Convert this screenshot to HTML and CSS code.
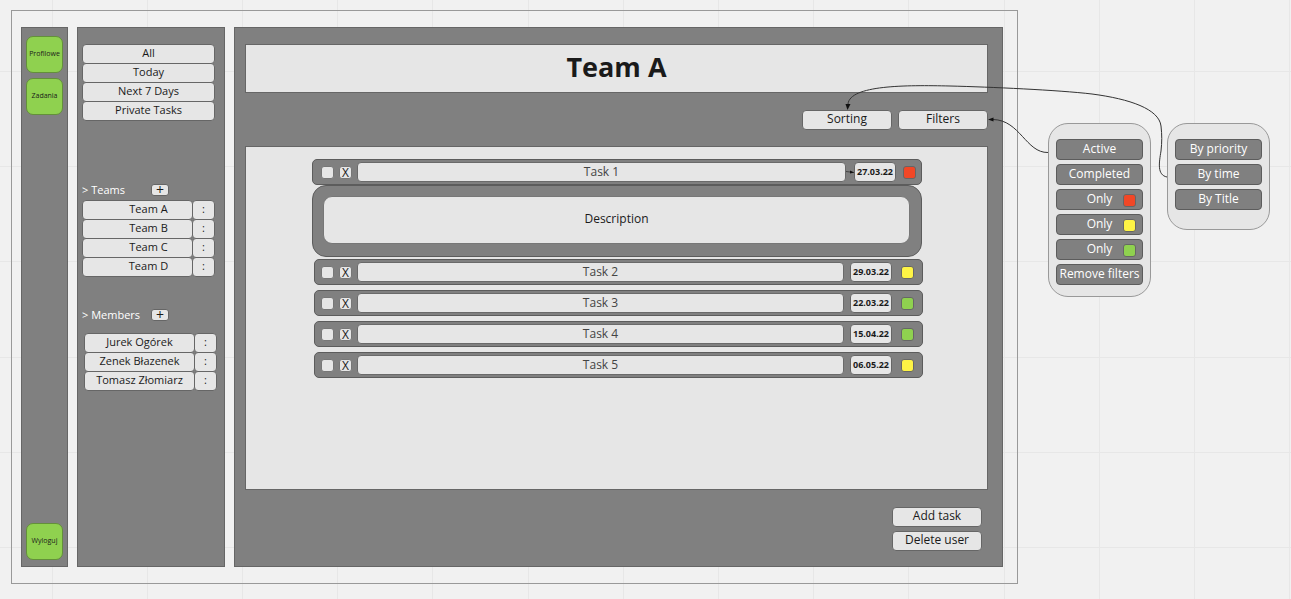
FILE: index.html
```html
<!DOCTYPE html>
<html lang="en">
<head>
<meta charset="utf-8">
<title>Team A</title>
<link rel="stylesheet" href="styles.css">
</head>
<body>
<svg class="grid" aria-hidden="true">
  <path d="M52.5 0V2000M147.5 0V2000M242.5 0V2000M337.5 0V2000M432.5 0V2000M528.5 0V2000M623.5 0V2000M718.5 0V2000M813.5 0V2000M908.5 0V2000M1004.5 0V2000M1099.5 0V2000M1194.5 0V2000M1289.5 0V2000M0 71.5H3000M0 166.5H3000M0 261.5H3000M0 357.5H3000M0 452.5H3000M0 547.5H3000"/>
</svg>
<div class="board">
  <div class="frame">
    <nav class="panel rail">
      <div class="rail-group">
        <button class="tile">Profilowe</button>
        <button class="tile">Zadania</button>
      </div>
      <button class="tile">Wyloguj</button>
    </nav>

    <aside class="panel sidebar">
      <div class="stack">
        <button class="btn">All</button>
        <button class="btn">Today</button>
        <button class="btn">Next 7 Days</button>
        <button class="btn">Private Tasks</button>
      </div>
      <section class="teams">
        <div class="section-head"><h2>&gt; Teams</h2><button class="add" aria-label="Add team">+</button></div>
        <div class="stack">
          <div class="split"><button class="btn">Team A</button><button class="btn more">:</button></div>
          <div class="split"><button class="btn">Team B</button><button class="btn more">:</button></div>
          <div class="split"><button class="btn">Team C</button><button class="btn more">:</button></div>
          <div class="split"><button class="btn">Team D</button><button class="btn more">:</button></div>
        </div>
      </section>
      <section class="members">
        <div class="section-head"><h2>&gt; Members</h2><button class="add" aria-label="Add member">+</button></div>
        <div class="stack">
          <div class="split"><button class="btn">Jurek Ogórek</button><button class="btn more">:</button></div>
          <div class="split"><button class="btn">Zenek Błazenek</button><button class="btn more">:</button></div>
          <div class="split"><button class="btn">Tomasz Złomiarz</button><button class="btn more">:</button></div>
        </div>
      </section>
    </aside>

    <main class="panel main">
      <h1 class="title">Team A</h1>
      <div class="toolbar">
        <button class="btn wide">Sorting</button>
        <button class="btn wide">Filters</button>
      </div>
      <div class="tasks">
        <div class="task open">
          <input class="check" type="checkbox" aria-label="Task 1 done">
          <button class="remove" aria-label="Remove Task 1">X</button>
          <input class="name" type="text" value="Task 1" aria-label="Task name">
          <svg class="link" viewBox="0 0 8 8" aria-hidden="true"><path d="M0 3.500L8 4.500" stroke="#444"/><path d="M4 2.500L8 4.500L4 5.500z" fill="#111"/></svg>
          <time class="date" datetime="2022-03-27">27.03.22</time>
          <span class="swatch red"></span>
        </div>
        <div class="details">
          <textarea class="description" aria-label="Description">Description</textarea>
        </div>
        <div class="task">
          <input class="check" type="checkbox" aria-label="Task 2 done">
          <button class="remove" aria-label="Remove Task 2">X</button>
          <input class="name" type="text" value="Task 2" aria-label="Task name">
          <time class="date" datetime="2022-03-29">29.03.22</time>
          <span class="swatch yellow"></span>
        </div>
        <div class="task">
          <input class="check" type="checkbox" aria-label="Task 3 done">
          <button class="remove" aria-label="Remove Task 3">X</button>
          <input class="name" type="text" value="Task 3" aria-label="Task name">
          <time class="date" datetime="2022-03-22">22.03.22</time>
          <span class="swatch green"></span>
        </div>
        <div class="task">
          <input class="check" type="checkbox" aria-label="Task 4 done">
          <button class="remove" aria-label="Remove Task 4">X</button>
          <input class="name" type="text" value="Task 4" aria-label="Task name">
          <time class="date" datetime="2022-04-15">15.04.22</time>
          <span class="swatch green"></span>
        </div>
        <div class="task">
          <input class="check" type="checkbox" aria-label="Task 5 done">
          <button class="remove" aria-label="Remove Task 5">X</button>
          <input class="name" type="text" value="Task 5" aria-label="Task name">
          <time class="date" datetime="2022-05-06">06.05.22</time>
          <span class="swatch yellow"></span>
        </div>
      </div>
      <div class="actions">
        <button class="btn wide">Add task</button>
        <button class="btn wide">Delete user</button>
      </div>
    </main>
  </div>

  <div class="popup">
    <button class="option">Active</button>
    <button class="option">Completed</button>
    <button class="option">Only<span class="swatch red"></span></button>
    <button class="option">Only<span class="swatch yellow"></span></button>
    <button class="option">Only<span class="swatch green"></span></button>
    <button class="option">Remove filters</button>
  </div>
  <div class="popup sort">
    <button class="option">By priority</button>
    <button class="option">By time</button>
    <button class="option">By Title</button>
  </div>

  <svg class="connectors" viewBox="791 0 500 200" aria-hidden="true">
    <path d="M1167 177C1157 175 1159 163 1161 151C1162 142 1162 135 1161 126C1159 109 1130 99 1092 94C1058 90 990 87 950 86C906 85 850 85 848 104"/>
    <path d="M1048 152.500C1026 153 1020 120 993 119.500"/>
    <path class="head" d="M845.500 104L850.500 104L847.500 110z"/>
    <path class="head" d="M988 119.500L993.500 117.500L993.500 121.500z"/>
  </svg>
</div>
</body>
</html>
```

FILE: styles.css
```css
* {
  box-sizing: border-box;
}

body {
  margin: 0;
  background: #f1f1f1;
  color: #1a1a1a;
  font: 12px/16px "Open Sans", "Noto Sans", sans-serif;
}

button,
input,
textarea {
  margin: 0;
  padding: 0;
  font: inherit;
  color: inherit;
}

h1,
h2 {
  margin: 0;
}

.grid {
  position: absolute;
  inset: 0;
  z-index: -1;
  width: 100%;
  height: 100%;
  stroke: #e7e7e7;
}

.board {
  position: relative;
  display: flex;
  align-items: flex-start;
  min-height: 100vh;
  padding: 10px 21px 15px 11px;
}

.frame {
  flex: 1;
  align-self: stretch;
  display: flex;
  gap: 9px;
  margin-right: 30px;
  padding: 16px 14px 16px 9px;
  border: 1px solid #999;
}

.panel {
  background: #808080;
  border: 1px solid #666;
}

.rail {
  display: flex;
  flex-direction: column;
  justify-content: space-between;
  width: 47px;
  padding: 8px 4px 6px;
}

.rail-group {
  display: grid;
  gap: 5px;
}

.tile {
  width: 37px;
  height: 37px;
  padding-bottom: 2px;
  border: 1px solid #63903a;
  border-radius: 7px;
  background: #8fd14f;
  font-size: 7px;
}

.sidebar {
  width: 148px;
  padding: 16px 9px 16px 4px;
  font-size: 11px;
}

.stack {
  display: flex;
  flex-direction: column;
}

.btn {
  height: 20px;
  padding-bottom: 2px;
  border: 1px solid #666;
  border-radius: 4px;
  background: #e6e6e6;
  line-height: 16px;
}

.stack .btn {
  margin-bottom: -1px;
}

.split {
  display: flex;
}

.split .btn {
  flex: 1;
  white-space: nowrap;
}

.split .more {
  flex: 0 0 23px;
  margin-left: -1px;
  padding-left: 0;
}

.teams .btn:first-child {
  padding-left: 22px;
}

.section-head {
  display: flex;
  align-items: center;
  height: 16px;
}

.section-head h2 {
  width: 69px;
  color: #fff;
  font-size: 11px;
  font-weight: 400;
}

.add {
  width: 18px;
  height: 12px;
  border: 1px solid #666;
  border-radius: 3px;
  background: #e6e6e6;
  font-size: 14px;
  line-height: 8px;
}

.teams {
  margin-top: 62px;
}

.teams .stack {
  margin-top: 2px;
}

.members {
  margin-top: 31px;
}

.members .stack {
  margin: 10px -2px 0 2px;
}

.main {
  flex: 1;
  display: flex;
  flex-direction: column;
  padding: 16px 14px 15px 10px;
}

.title {
  height: 49px;
  border: 1px solid #666;
  background: #e6e6e6;
  font-size: 27px;
  font-weight: 700;
  line-height: 43px;
  text-align: center;
}

.toolbar {
  display: flex;
  justify-content: flex-end;
  gap: 6px;
  margin: 17px 0 16px;
}

.wide {
  width: 90px;
}

.tasks {
  flex: 1;
  padding: 12px 64px 12px 66px;
  border: 1px solid #666;
  background: #e6e6e6;
}

.task {
  display: flex;
  align-items: center;
  height: 26px;
  margin: 0 0 5px 2px;
  padding: 0 8px 0 6px;
  border: 1px solid #5c5c5c;
  border-radius: 5px;
  background: #808080;
}

.open {
  margin: 0 1px 0 0;
  padding: 0 5px 0 8px;
}

.check,
.remove {
  appearance: none;
  width: 13px;
  height: 13px;
  border: 1px solid #777;
  border-radius: 3px;
  background: #e6e6e6;
}

.remove {
  margin: 0 5px;
  line-height: 11px;
}

.name {
  flex: 1;
  min-width: 0;
  height: 20px;
  padding-bottom: 2px;
  border: 1px solid #6a6a6a;
  border-radius: 4px;
  background: #e6e6e6;
  color: #444;
  text-align: center;
}

.link {
  width: 8px;
  height: 8px;
}

.date {
  width: 42px;
  height: 20px;
  margin-left: 6px;
  border: 1px solid #666;
  border-radius: 4px;
  background: #e6e6e6;
  font-size: 9px;
  font-weight: 700;
  line-height: 17px;
  text-align: center;
}

.link + .date {
  margin-left: 0;
}

.swatch {
  width: 13px;
  height: 13px;
  margin-left: 9px;
  border: 1px solid #666;
  border-radius: 3px;
}

.open .swatch {
  margin-left: 7px;
}

.red {
  background: #f24726;
}

.yellow {
  background: #fef445;
}

.green {
  background: #8fd14f;
}

.details {
  height: 72px;
  margin-right: 1px;
  margin-bottom: 2px;
  padding: 10px 11px 12px 10px;
  border: 1px solid #5c5c5c;
  border-radius: 14px;
  background: #808080;
}

.description {
  display: block;
  width: 100%;
  height: 48px;
  padding: 14px 0;
  border: 1px solid #777;
  border-radius: 9px;
  background: #e6e6e6;
  text-align: center;
  resize: none;
}

.actions {
  display: flex;
  flex-direction: column;
  align-items: flex-end;
  gap: 4px;
  margin: 17px 6px 0 0;
}

.popup {
  display: flex;
  flex-direction: column;
  gap: 4px;
  width: 103px;
  margin-top: 113px;
  padding: 15px 7px 11px;
  border: 1px solid #999;
  border-radius: 20px;
  background: #e6e6e6;
}

.sort {
  margin-left: 16px;
  padding-bottom: 19px;
}

.option {
  position: relative;
  height: 21px;
  padding-bottom: 2px;
  border: 1px solid #5c5c5c;
  border-radius: 4px;
  background: #808080;
  color: #fff;
  white-space: nowrap;
}

.option .swatch {
  position: absolute;
  top: 4px;
  right: 6px;
}

.connectors {
  position: absolute;
  top: 0;
  right: 0;
  width: 500px;
  height: 200px;
  fill: none;
  stroke: #333;
  pointer-events: none;
}

.head {
  fill: #111;
  stroke: none;
}
```
